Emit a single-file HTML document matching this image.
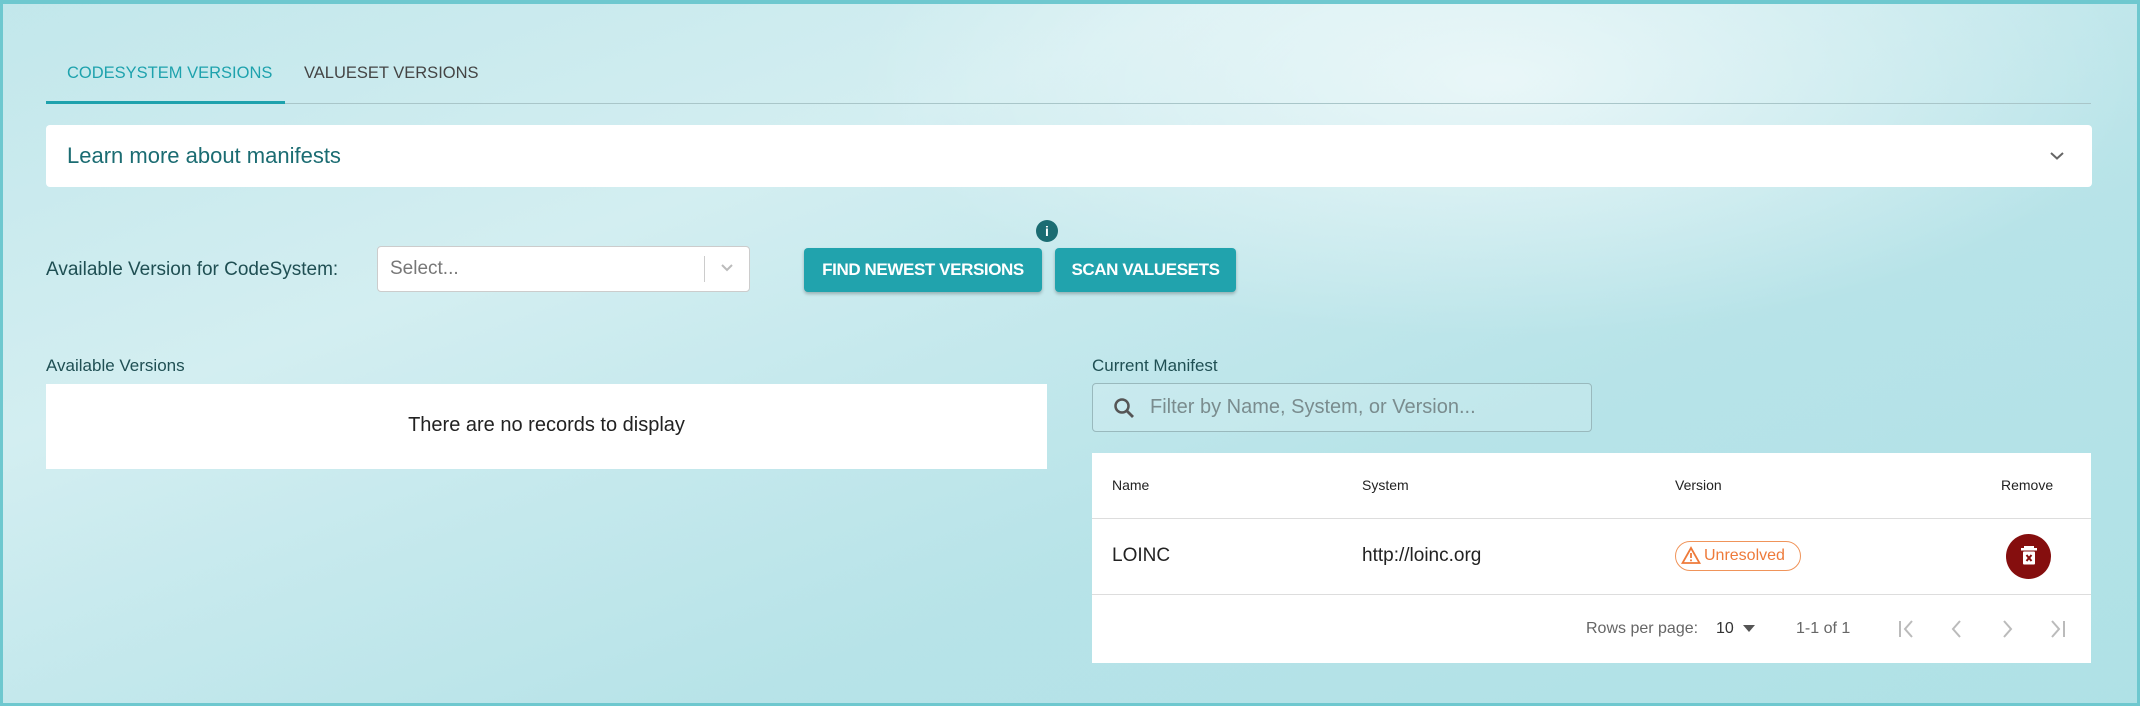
<!DOCTYPE html>
<html><head><meta charset="utf-8"><style>
*{box-sizing:border-box;margin:0;padding:0}
body{width:2140px;height:706px;overflow:hidden;font-family:"Liberation Sans",sans-serif;position:relative;
background:linear-gradient(160deg,#c2e7eb 0%,#d3eef1 30%,#c6e9ed 45%,#b7e3e8 65%,#afe1e6 100%);}
.glow{position:absolute;left:800px;top:-200px;width:1400px;height:560px;background:radial-gradient(ellipse at center,rgba(255,255,255,.6),rgba(255,255,255,0) 65%);}
.frame{position:absolute;inset:0;border:3px solid #6ec8cf;border-top-width:4px}
.abs{position:absolute}
.tab{font-size:16.5px;top:64px;color:#444}
.card{background:#fff}
.btn{background:#21a3ad;color:#fff;font-size:17px;font-weight:bold;border-radius:4px;box-shadow:0 2px 3px rgba(0,0,0,.25);display:flex;align-items:center;justify-content:center;letter-spacing:-.4px}
.th{font-size:14px;color:#222;top:477px}
.td{font-size:19px;color:#222;top:545px}
.pg{font-size:16px;color:#666;top:620px}
</style></head><body>
<div class="glow"></div>
<div class="frame"></div>
<div class="abs tab" style="left:67px;color:#1ea2ad">CODESYSTEM VERSIONS</div>
<div class="abs tab" style="left:304px">VALUESET VERSIONS</div>
<div class="abs" style="left:46px;top:103px;width:2045px;height:1px;background:#a9c6c9"></div>
<div class="abs" style="left:46px;top:101px;width:239px;height:3px;background:#1ea2ad"></div>
<div class="abs card" style="left:46px;top:125px;width:2046px;height:62px;border-radius:4px"></div>
<div class="abs" style="left:67px;top:143px;font-size:22px;color:#1b6c72">Learn more about manifests</div>
<svg class="abs" style="left:2048px;top:150px" width="18" height="12"><path d="M3 3l6 5.5 6-5.5" stroke="#666" stroke-width="2" fill="none"/></svg>
<div class="abs" style="left:46px;top:259px;font-size:19px;color:#1f4f53">Available Version for CodeSystem:</div>
<div class="abs card" style="left:377px;top:246px;width:373px;height:46px;border:1px solid #ccc;border-radius:4px"></div>
<div class="abs" style="left:390px;top:258px;font-size:19px;color:#777">Select...</div>
<div class="abs" style="left:704px;top:256px;width:1px;height:26px;background:#ccc"></div>
<svg class="abs" style="left:720px;top:263px" width="14" height="10"><path d="M2 2l5 5 5-5" stroke="#bbb" stroke-width="2" fill="none"/></svg>
<div class="abs" style="left:1036px;top:220px;width:22px;height:22px;border-radius:50%;background:#1b6c72;color:#fff;font-size:14px;font-weight:bold;text-align:center;line-height:22px">i</div>
<div class="abs btn" style="left:804px;top:248px;width:238px;height:44px">FIND NEWEST VERSIONS</div>
<div class="abs btn" style="left:1055px;top:248px;width:181px;height:44px">SCAN VALUESETS</div>
<div class="abs" style="left:46px;top:356px;font-size:17px;color:#1f4f53">Available Versions</div>
<div class="abs card" style="left:46px;top:384px;width:1001px;height:85px"></div>
<div class="abs" style="left:46px;top:414px;width:1001px;text-align:center;font-size:20px;color:#222">There are no records to display</div>
<div class="abs" style="left:1092px;top:356px;font-size:17px;color:#1f4f53">Current Manifest</div>
<div class="abs" style="left:1092px;top:383px;width:500px;height:49px;border:1.5px solid #99b9bd;border-radius:4px;background:rgba(255,255,255,.15)"></div>
<svg class="abs" style="left:1112px;top:396px" width="24" height="24"><circle cx="10" cy="10" r="6.5" stroke="#555" stroke-width="2.5" fill="none"/><path d="M15 15l6 6" stroke="#555" stroke-width="2.8"/></svg>
<div class="abs" style="left:1150px;top:396px;font-size:20px;color:#7a8c8e">Filter by Name, System, or Version...</div>
<div class="abs card" style="left:1092px;top:453px;width:999px;height:210px"></div>
<div class="abs" style="left:1092px;top:518px;width:999px;height:1px;background:#ddd"></div>
<div class="abs" style="left:1092px;top:594px;width:999px;height:1px;background:#ddd"></div>
<div class="abs th" style="left:1112px">Name</div>
<div class="abs th" style="left:1362px">System</div>
<div class="abs th" style="left:1675px">Version</div>
<div class="abs th" style="left:2001px">Remove</div>
<div class="abs td" style="left:1112px">LOINC</div>
<div class="abs td" style="left:1362px">http://loinc.org</div>
<div class="abs" style="left:1675px;top:541px;width:126px;height:30px;border:1.5px solid #f0945a;border-radius:15px;color:#ee7a3a;font-size:16px;line-height:27px;padding-left:28px">Unresolved</div>
<svg class="abs" style="left:1681px;top:546px" width="20" height="19"><path d="M10 2L1.5 17h17z" stroke="#ee7a3a" stroke-width="1.8" fill="none"/><path d="M10 7v5M10 13.5v1.8" stroke="#ee7a3a" stroke-width="1.8"/></svg>
<div class="abs" style="left:2006px;top:534px;width:45px;height:45px;border-radius:50%;background:#850e0e"></div>
<svg class="abs" style="left:2018px;top:544px" width="22" height="24"><rect x="6" y="2" width="10" height="2" fill="#fff"/><rect x="3" y="4" width="16" height="2.5" fill="#fff"/><rect x="5" y="7.5" width="12" height="13" rx="1" fill="#fff"/><path d="M8.5 11l5 6M13.5 11l-5 6" stroke="#850e0e" stroke-width="2"/></svg>
<div class="abs pg" style="left:1586px">Rows per page:</div>
<div class="abs pg" style="left:1716px;color:#333">10</div>
<svg class="abs" style="left:1743px;top:625px" width="12" height="8"><path d="M0 0h12L6 7z" fill="#555"/></svg>
<div class="abs pg" style="left:1796px">1-1 of 1</div>
<svg class="abs" style="left:1896px;top:617px" width="180" height="24" fill="none" stroke="#bbb" stroke-width="2"><path d="M4 4v16M16 4l-7 8 7 8"/><path d="M64 4l-7 8 7 8"/><path d="M108 4l7 8-7 8"/><path d="M156 4l7 8-7 8M168 4v16"/></svg>
</body></html>
